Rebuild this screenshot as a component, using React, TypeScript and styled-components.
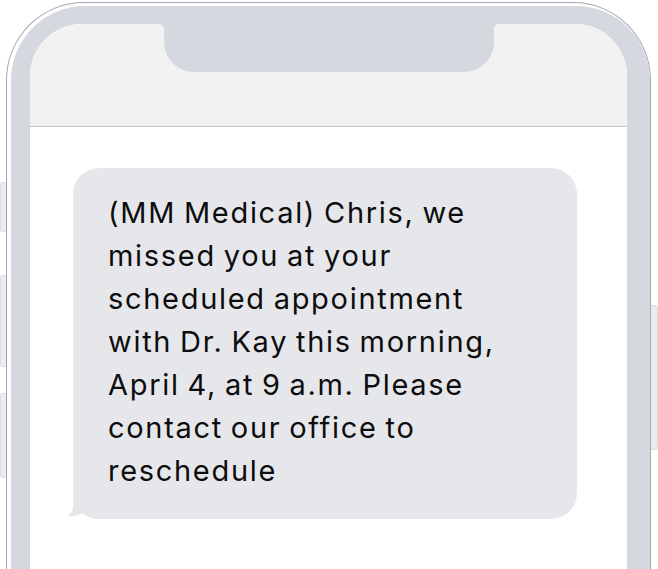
import React from 'react';
import styled, {createGlobalStyle} from "styled-components";

const GlobalStyle = createGlobalStyle`
  html, body {
    margin: 0;
    padding: 0;
    background: #ffffff;
    overflow: hidden;
  }
`

const lines = [
    "(MM Medical) Chris, we",
    "missed you at your",
    "scheduled appointment",
    "with Dr. Kay this morning,",
    "April 4, at 9 a.m. Please",
    "contact our office to",
    "reschedule",
];

export default function App() {
    return (
        <>
            <GlobalStyle/>
            <Device>
                <Rail $side="left" $start={182}>
                    <SideButton $side="left" $height={50}/>
                    <SideButton $side="left" $height={92} $space={43}/>
                    <SideButton $side="left" $height={85} $space={26}/>
                </Rail>
                <Phone>
                    <Bezel>
                        <Screen>
                            <StatusBar>
                                <Notch/>
                            </StatusBar>
                            <Conversation>
                                <Bubble>
                                    {lines.map((l, i) => (
                                        <React.Fragment key={i}>
                                            {l}
                                            {i < lines.length - 1 && <br/>}
                                        </React.Fragment>
                                    ))}
                                    <Tail width="32" height="25" viewBox="0 0 32 25">
                                        <path d="M8 0 L8 11 C8 16 6.5 19.5 2 22.2 C7.5 23.2 13.5 21.5 18 18 C22 22 26 24.5 32 25 L32 0 Z"/>
                                    </Tail>
                                </Bubble>
                            </Conversation>
                        </Screen>
                    </Bezel>
                </Phone>
                <Rail $side="right" $start={305}>
                    <SideButton $side="right" $height={145}/>
                </Rail>
            </Device>
        </>
    );
}

const Device = styled.div`
  display: flex;
  align-items: flex-start;
  height: 569px;
  overflow: hidden;
`

const Rail = styled.div<{ $side: "left" | "right"; $start: number }>`
  display: flex;
  flex-direction: column;
  flex-shrink: 0;
  width: ${p => p.$side === "left" ? 6 : 7}px;
  padding-top: ${p => p.$start}px;
`

const SideButton = styled.div<{ $side: "left" | "right"; $height: number; $space?: number }>`
  height: ${p => p.$height}px;
  margin-top: ${p => p.$space ?? 0}px;
  box-sizing: border-box;
  background: #ebecee;
  border: 1px solid #dcdee1;
  ${p => p.$side === "left"
    ? `border-right: none; border-radius: 3px 0 0 3px;`
    : `border-left: none; border-radius: 0 3px 3px 0;`}
`

const Phone = styled.div`
  box-sizing: border-box;
  flex-shrink: 0;
  width: 645px;
  margin-top: 2px;
  padding: 3px 0 0 4px;
  background: #ffffff;
  border: 1px solid #a4a7ac;
  border-bottom: none;
  border-radius: 78px 78px 0 0;
`

const Bezel = styled.div`
  background: #d5d9df;
  border-radius: 74px 74px 0 0;
  padding: 18px 23px 0 19px;
  height: 580px;
  display: flex;
`

const Screen = styled.div`
  flex: 1;
  background: #ffffff;
  border-radius: 52px 52px 0 0;
  overflow: hidden;
  display: flex;
  flex-direction: column;
`

const StatusBar = styled.div`
  height: 102px;
  flex-shrink: 0;
  background: #f2f2f3;
  border-bottom: 1px solid #c3c6cb;
  display: flex;
  justify-content: center;
`

const Notch = styled.div`
  position: relative;
  width: 330px;
  height: 48px;
  background: #d5d9df;
  border-radius: 0 0 30px 30px;

  &::before, &::after {
    content: "";
    position: absolute;
    top: 0;
    width: 6px;
    height: 6px;
  }

  &::before {
    left: -6px;
    background: radial-gradient(circle at 0 100%, transparent 6px, #d5d9df 6.5px);
  }

  &::after {
    right: -6px;
    background: radial-gradient(circle at 100% 100%, transparent 6px, #d5d9df 6.5px);
  }
`

const Conversation = styled.div`
  padding: 41px 0 0 43px;
`

const Bubble = styled.div`
  position: relative;
  box-sizing: border-box;
  width: 504px;
  padding: 23px 10px 27px 35px;
  background: #e6e7eb;
  border-radius: 26px;
  color: #0d0d0d;
  font-family: Inter, "Noto Sans", sans-serif;
  font-size: 29px;
  line-height: 43px;
  letter-spacing: 1.7px;
  word-spacing: -2px;
  white-space: nowrap;
`

const Tail = styled.svg`
  position: absolute;
  left: -8px;
  bottom: 0;
  fill: #e6e7eb;
`
